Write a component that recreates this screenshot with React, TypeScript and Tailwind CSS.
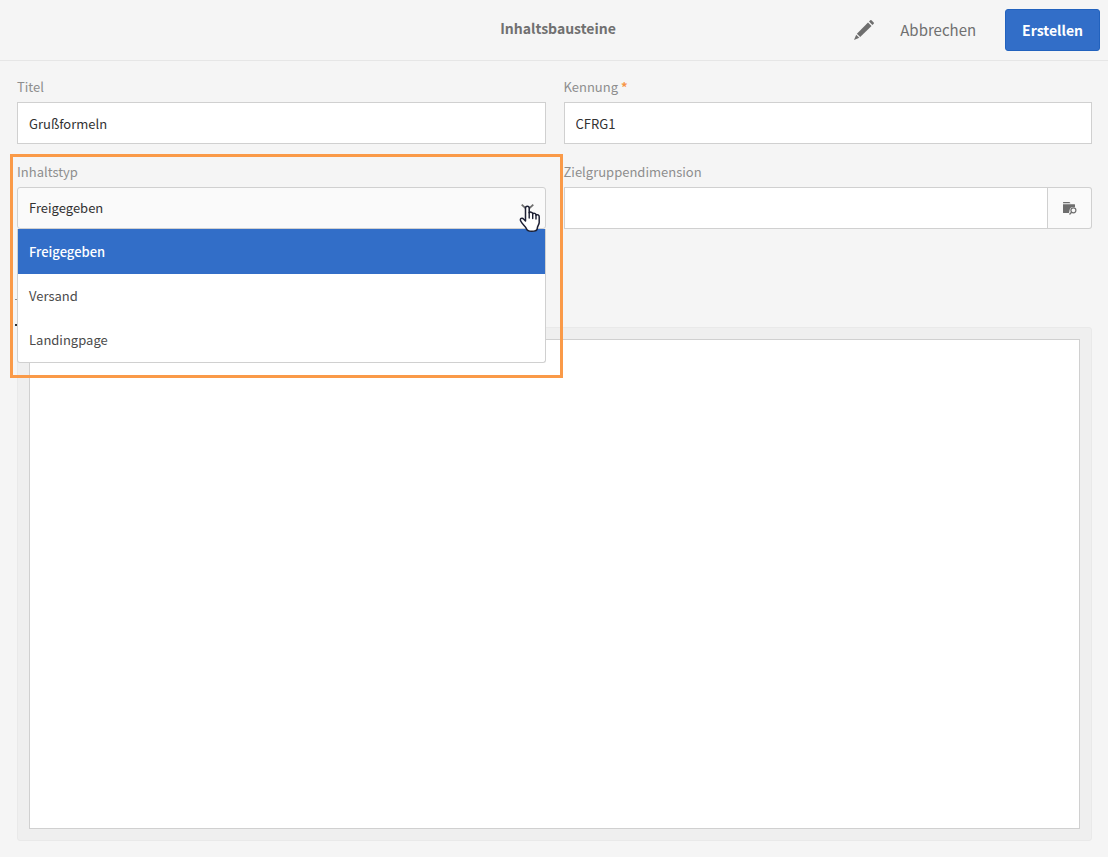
import React, { useState } from "react";

const CONTENT_TYPES = ["Freigegeben", "Versand", "Landingpage"];

const labelClass = "block h-6 text-[13px] leading-[18px] text-[#8e8e8e]";
const inputClass =
  "block h-[42px] w-full border border-[#d0d0d0] bg-white px-[11px] text-[13px] text-[#323232] outline-none";

const PencilIcon: React.FC = () => (
  <svg width="20" height="20" viewBox="0 0 20 20" fill="#6e6e6e" aria-hidden="true">
    <path d="M15 1.500 16.300.3q.6-.5 1.200 0l2.200 2.200q.5.600 0 1.200l-1.300 1.300z" />
    <path d="M14 2.500 17.500 6 6.200 17.100 2.900 13.800z" />
    <path d="M2.200 14.700 5.300 17.800 0 20z" />
  </svg>
);

const FolderSearchIcon: React.FC = () => (
  <svg width="14" height="14" viewBox="0 0 14 14" aria-hidden="true">
    <path d="M0 1.500Q0 1 .5 1H6.500L7.500 2.200H0z" fill="#6e6e6e" />
    <path d="M0 3.200H11.500Q12 3.200 12 3.700V6.200Q7 5.500 6.500 9.500L6 12H.5Q0 12 0 11.500z" fill="#6e6e6e" />
    <circle cx="10.400" cy="9.300" r="2.500" fill="#fafafa" stroke="#6e6e6e" strokeWidth="1.200" />
    <path d="M8.600 11.200 6.900 12.900" stroke="#6e6e6e" strokeWidth="1.400" strokeLinecap="round" />
  </svg>
);

const HandPointer: React.FC = () => (
  <svg width="22" height="28" viewBox="0 0 22 28" aria-hidden="true">
    <path
      d="M6.500 16V3.200C6.500 .6 10.200 .6 10.200 3.200V7.800C10.800 6.700 13.600 6.900 13.700 8.700C14.700 7.800 16.900 8.300 17 10C18.400 9.200 20.200 10 20.200 11.700V17.500C20.200 19.500 18.300 21.300 18.300 23.200Q18.300 26.300 12.600 26.300Q8.300 26.300 7.300 23.500C6.500 21.200 3.200 19.200 1.700 16C.4 13.300 3.200 12.400 4.800 14.200z"
      fill="#fff"
      stroke="#1c1f33"
      strokeWidth="1.500"
      strokeLinejoin="round"
    />
    <path
      d="M10.200 7.500V13M13.700 8.700V13.500M17 10V14"
      fill="none"
      stroke="#1c1f33"
      strokeWidth="1.400"
      strokeLinecap="round"
    />
  </svg>
);

const App: React.FC = () => {
  const [title, setTitle] = useState("Grußformeln");
  const [id, setId] = useState("CFRG1");
  const [contentType, setContentType] = useState("Freigegeben");
  const [dimension, setDimension] = useState("");
  const [content, setContent] = useState("");

  return (
    <div className="flex min-h-screen flex-col bg-[#f5f5f5] font-['Noto_Sans_CJK_SC','Noto_Sans',sans-serif]">
      {/* Header */}
      <header className="grid h-[61px] grid-cols-[1fr_auto_1fr] items-center border-b border-[#e6e6e6] pr-2 pl-4">
        <h1 className="col-start-2 pb-1 text-sm leading-5 font-bold text-[#707070]">
          Inhaltsbausteine
        </h1>
        <div className="flex items-center justify-end">
          <button type="button" aria-label="Bearbeiten" className="mr-[26px]">
            <PencilIcon />
          </button>
          <button type="button" className="mr-[29px] text-[15px] leading-5 text-[#707070]">
            Abbrechen
          </button>
          <button
            type="button"
            className="h-[42px] rounded-[3px] border border-[#2262be] bg-[#326ec8] px-4 text-sm leading-5 font-bold text-white"
          >
            Erstellen
          </button>
        </div>
      </header>

      <main className="flex flex-1 flex-col pt-[17px] pr-4 pb-4 pl-[17px]">
        <form className="grid grid-cols-2 gap-x-[18px] gap-y-[19px]">
          <div>
            <label htmlFor="title" className={labelClass}>
              Titel
            </label>
            <input
              id="title"
              className={inputClass}
              value={title}
              onChange={(e) => setTitle(e.target.value)}
            />
          </div>

          <div>
            <label htmlFor="identifier" className={labelClass}>
              Kennung <span className="font-bold text-[#f79646]">*</span>
            </label>
            <input
              id="identifier"
              required
              className={inputClass}
              value={id}
              onChange={(e) => setId(e.target.value)}
            />
          </div>

          {/* Content type with its open list */}
          <div className="relative">
            <label htmlFor="content-type" className={labelClass}>
              Inhaltstyp
            </label>
            <select
              id="content-type"
              className="block h-[42px] w-full appearance-none rounded-[3px] border border-[#d0d0d0] bg-[#fafafa] px-[11px] text-[13px] text-[#323232] outline-none"
              value={contentType}
              onChange={(e) => setContentType(e.target.value)}
            >
              {CONTENT_TYPES.map((type) => (
                <option key={type}>{type}</option>
              ))}
            </select>
            <svg
              className="pointer-events-none absolute top-[41px] right-3 z-20"
              width="13"
              height="8"
              viewBox="0 0 13 8"
              aria-hidden="true"
            >
              <path d="M.7.700 6.500 6 12.300.7" fill="none" stroke="#6e6e6e" strokeWidth="1.800" />
            </svg>
            <ul
              role="listbox"
              aria-label="Inhaltstyp"
              className="absolute inset-x-0 top-full z-10 rounded-b-[3px] border border-t-0 border-[#d0d0d0] bg-white text-[13px]"
            >
              {CONTENT_TYPES.map((type) => (
                <li
                  key={type}
                  role="option"
                  aria-selected={type === contentType}
                  onClick={() => setContentType(type)}
                  className={
                    type === contentType
                      ? "flex h-[45px] items-center bg-[#326ec8] px-[11px] font-medium text-white"
                      : "flex h-11 items-center px-[11px] text-[#4b4b4b]"
                  }
                >
                  {type}
                </li>
              ))}
            </ul>
            <div className="pointer-events-none absolute -top-[9px] -right-[17px] -bottom-[149px] -left-[7px] z-20 border-[3px] border-[#fa9a48]" />
            <div className="pointer-events-none absolute top-[42px] right-[5px] z-30">
              <HandPointer />
            </div>
          </div>

          <div>
            <label htmlFor="dimension" className={labelClass}>
              Zielgruppendimension
            </label>
            <div className="flex">
              <input
                id="dimension"
                className={inputClass}
                value={dimension}
                onChange={(e) => setDimension(e.target.value)}
              />
              <button
                type="button"
                aria-label="Zielgruppendimension auswählen"
                className="flex h-[42px] w-11 shrink-0 items-center justify-center rounded-r-[3px] border border-l-0 border-[#d0d0d0] bg-[#fafafa]"
              >
                <FolderSearchIcon />
              </button>
            </div>
          </div>
        </form>

        {/* Tab strip, mostly behind the open list */}
        <div className="-ml-0.5 flex h-[98px] flex-col pt-[70px]" aria-hidden="true">
          <span className="h-px w-3 bg-[#8e8e8e]" />
          <span className="mt-6 h-0.5 w-3 bg-[#323232]" />
        </div>

        {/* Editor */}
        <div className="flex flex-1 rounded-[3px] border border-[#e9e9e9] bg-[#efefef] p-[11px]">
          <textarea
            aria-label="Inhalt"
            className="flex-1 resize-none border border-[#d0d0d0] bg-white p-3 text-[13px] text-[#323232] outline-none"
            value={content}
            onChange={(e) => setContent(e.target.value)}
          />
        </div>
      </main>
    </div>
  );
};

export default App;
